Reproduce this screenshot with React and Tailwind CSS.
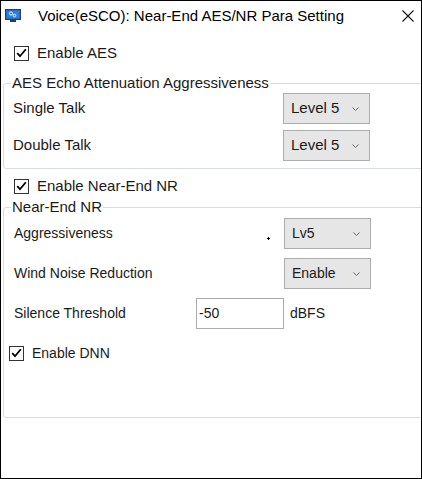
import React from "react";

function Check({ className = "" }) {
  return (
    <span className={`inline-flex items-center justify-center w-[15px] h-[15px] border border-[#333333] bg-white shrink-0 ${className}`}>
      <svg width="11" height="10" viewBox="0 0 11 10">
        <path d="M1.2 5.2 L4 8.2 L9.8 1.2" fill="none" stroke="#000" strokeWidth="1.8" />
      </svg>
    </span>
  );
}

function Drop({ value }) {
  return (
    <div className="w-[87px] h-[31px] border border-[#adadad] bg-[#e6e6e6] flex items-center justify-between pl-[7px] pr-[10px]">
      <span>{value}</span>
      <svg width="7" height="4" viewBox="0 0 7 4">
        <path d="M0.5 0.5 L3.5 3.5 L6.5 0.5" fill="none" stroke="#666" strokeWidth="1" />
      </svg>
    </div>
  );
}

function Row({ label, value }) {
  return (
    <div className="flex items-center h-[31px]">
      <div className="w-[270px]">{label}</div>
      <Drop value={value} />
    </div>
  );
}

export default function App() {
  return (
    <div className="relative w-[422px] h-[479px] border border-black bg-white overflow-hidden text-[#1a1a1a] font-['Liberation_Sans',Arial,sans-serif]">
      {/* title bar */}
      <div className="flex items-center h-[30px] pl-[4px] pr-[7px] text-[15px]">
        <svg width="16" height="14" viewBox="0 0 16 14">
          <rect x="0.5" y="0.5" width="15" height="10" fill="#1c5fb8" stroke="#2d3e55" />
          <rect x="1.5" y="1.5" width="13" height="8" fill="#2f7fd8" />
          <circle cx="6" cy="4.5" r="1.6" fill="none" stroke="#e8f2ff" strokeWidth="1" />
          <circle cx="9.5" cy="6.5" r="1.3" fill="none" stroke="#e8f2ff" strokeWidth="1" />
          <rect x="5" y="11" width="6" height="2" fill="#3a3a3a" />
        </svg>
        <div className="ml-[17px] flex-1 text-black">Voice(eSCO): Near-End AES/NR Para Setting</div>
        <svg width="12" height="12" viewBox="0 0 12 12">
          <path d="M0.5 0.5 L11.5 11.5 M11.5 0.5 L0.5 11.5" stroke="#111" strokeWidth="1.1" />
        </svg>
      </div>

      {/* enable AES */}
      <div className="flex items-center h-[44px] pl-[13px] text-[15px]">
        <Check />
        <span className="ml-[8px]">Enable AES</span>
      </div>

      <fieldset className="ml-[2px] -mr-4 border border-[#d8dcdf] rounded-[3px] pb-[7px] text-[15px]">
        <legend className="ml-[7px] px-[1px] leading-[16px]">AES Echo Attenuation Aggressiveness</legend>
        <div className="mt-[2px] pl-[9px] flex flex-col gap-[6px]">
          <Row label="Single Talk" value="Level 5" />
          <Row label="Double Talk" value="Level 5" />
        </div>
      </fieldset>

      {/* enable NR */}
      <div className="flex items-center h-[30px] pt-[4px] pl-[13px] text-[15px]">
        <Check />
        <span className="ml-[8px]">Enable Near-End NR</span>
      </div>

      <fieldset className="ml-[2px] -mr-4 border border-[#d8dcdf] rounded-[3px] pb-[56px] text-[14px]">
        <legend className="ml-[7px] px-[1px] leading-[16px] text-[15px]">Near-End NR</legend>
        <div className="mt-[3px] pl-[10px] flex flex-col gap-[9px]">
          <Row label="Aggressiveness" value="Lv5" />
          <Row label="Wind Noise Reduction" value="Enable" />
          <div className="flex items-center h-[31px]">
            <div className="w-[182px]">Silence Threshold</div>
            <div className="w-[88px] h-[31px] border border-[#abadb3] bg-white flex items-center pl-[2px]">-50</div>
            <span className="ml-[6px]">dBFS</span>
          </div>
        </div>
        <div className="flex items-center mt-[16px] pl-[5px] h-[16px]">
          <Check />
          <span className="ml-[8px]">Enable DNN</span>
        </div>
      </fieldset>

      <div className="absolute left-[266px] top-[237px] w-[3px] h-[1px] bg-black" />
      <div className="absolute left-[267px] top-[236px] w-[1px] h-[3px] bg-black" />
    </div>
  );
}
